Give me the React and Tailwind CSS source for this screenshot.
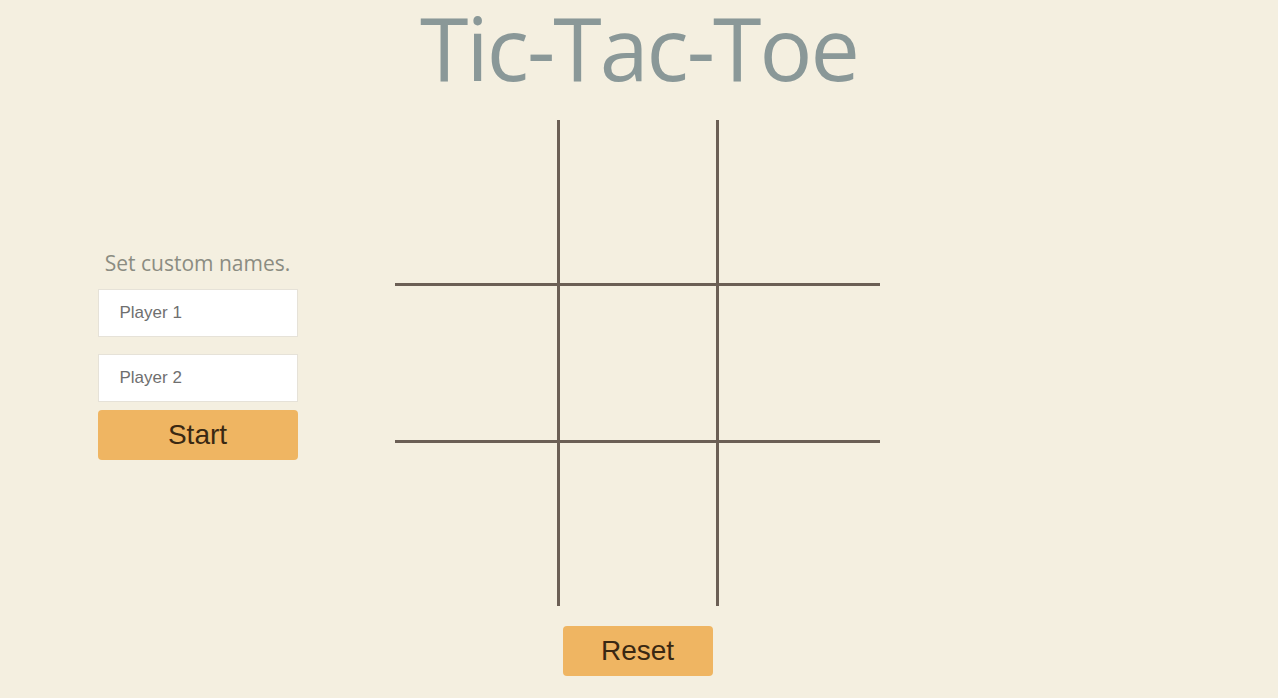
import React from "react";

function Board() {
  const cells = Array.from({ length: 9 });
  return (
    <div className="grid grid-cols-[162px_162px_161px] grid-rows-[163px_160px_163px]">
      {cells.map((_, i) => {
        const col = i % 3;
        const row = Math.floor(i / 3);
        return (
          <div
            key={i}
            className={
              (col === 1 ? "border-x-[3px] border-x-[#6b5f55] " : "") +
              (row === 1 ? "border-y-[3px] border-y-[#6b5f55]" : "")
            }
          />
        );
      })}
    </div>
  );
}

export default function App() {
  return (
    <div className="w-full min-h-[698px] flex flex-col bg-[#f4efe0] font-['Open_Sans',sans-serif]">
      {/* Title */}
      <h1 className="text-center text-[88px] leading-[94px] text-[#8a9898] tracking-[-2px]">
        Tic-Tac-Toe
      </h1>

      <div className="grid grid-cols-[395px_auto_1fr] mt-[26px]">
        {/* Names panel */}
        <div className="flex items-center justify-center">
          <div className="w-[200px] flex flex-col items-center mb-[18px]">
            <p className="text-[21px] text-[#8b8c82] mb-[10px]">Set custom names.</p>
            <input
              placeholder="Player 1"
              className="w-full h-[48px] bg-white border border-[#e6e2d8] px-[21px] text-[17px] font-['Liberation_Sans',sans-serif] placeholder:text-[#6f6f6f] outline-none"
            />
            <input
              placeholder="Player 2"
              className="w-full h-[48px] bg-white border border-[#e6e2d8] px-[21px] text-[17px] font-['Liberation_Sans',sans-serif] placeholder:text-[#6f6f6f] outline-none mt-[17px]"
            />
            <button className="w-full h-[50px] mt-[8px] rounded-[4px] bg-[#efb562] text-[#3a2812] text-[28px] font-['Liberation_Sans',sans-serif]">
              Start
            </button>
          </div>
        </div>

        {/* Board */}
        <div className="flex justify-center">
          <Board />
        </div>

        <div />

        {/* Reset */}
        <div />
        <div className="flex justify-center">
          <button className="w-[150px] h-[50px] mt-[20px] rounded-[4px] bg-[#efb562] text-[#3a2812] text-[28px] font-['Liberation_Sans',sans-serif]">
            Reset
          </button>
        </div>
        <div />
      </div>
    </div>
  );
}
